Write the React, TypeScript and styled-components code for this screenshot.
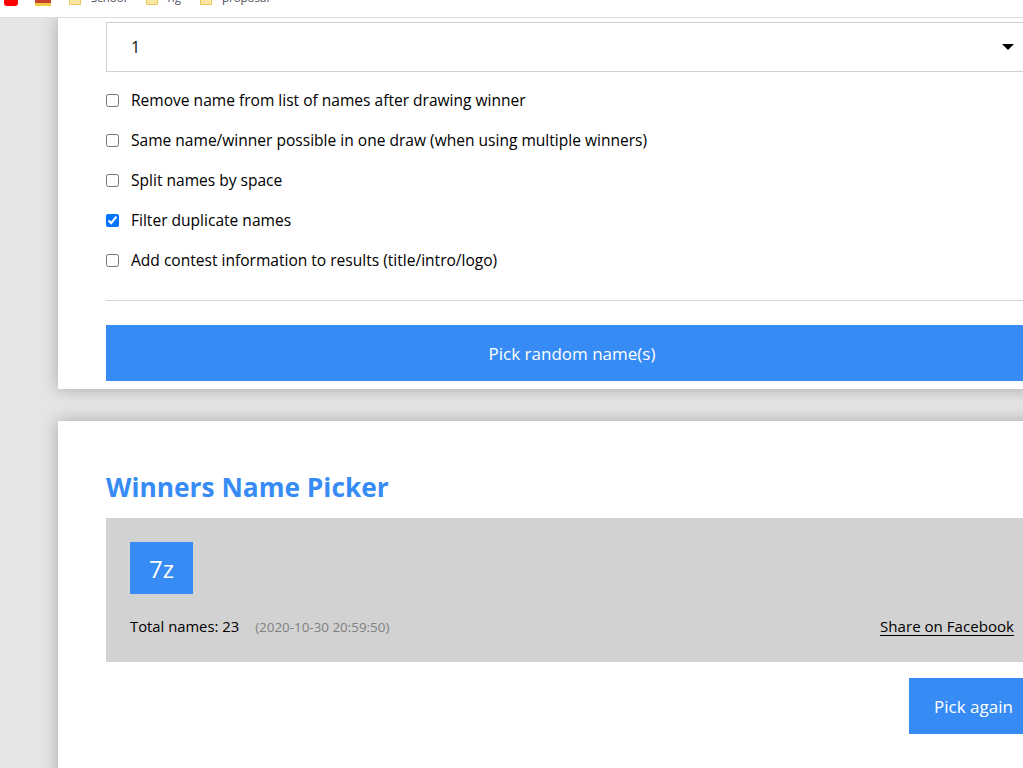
import styled, { createGlobalStyle } from "styled-components"

const Global = createGlobalStyle`
    html, body {
        margin: 0;
        padding: 0;
        width: 1023px;
        height: 768px;
        overflow: hidden;
        background: #e5e5e5;
        font-family: "Open Sans", "Noto Sans", sans-serif;
    }
`

const Bookmarks = styled.div`
    position: relative;
    z-index: 1;
    height: 18px;
    box-sizing: border-box;
    background: #ffffff;
    border-bottom: 1px solid #dcdcdc;
    display: flex;
    align-items: flex-end;
    padding: 0 0 11px 4px;
    overflow: hidden;
`

const Mark = styled.div<{ $gap: number }>`
    display: flex;
    align-items: center;
    flex-shrink: 0;
    gap: 10px;
    margin-right: ${p => p.$gap}px;
    font-size: 11.5px;
    line-height: 16px;
    color: #4a4a5a;
`

const Page = styled.main`
    padding-left: 58px;
    display: flex;
    flex-direction: column;
    gap: 32px;
    width: 1028px;
`

const Card = styled.section`
    background: #ffffff;
    box-shadow: 0 0 16px rgba(0, 0, 0, 0.28);
    padding: 0 48px 8px;
    width: 932px;
    flex-shrink: 0;
`

const TopCard = styled(Card)`
    padding-top: 4px;
`

const SelectBox = styled.div`
    height: 50px;
    box-sizing: border-box;
    border: 1px solid #d0d0d0;
    display: flex;
    align-items: center;
    justify-content: space-between;
    padding: 0 23px 0 24px;
    font-size: 16px;
    color: #111111;
`

const Caret = styled.span`
    width: 0;
    height: 0;
    border-left: 6px solid transparent;
    border-right: 6px solid transparent;
    border-top: 6px solid #000000;
`

const Options = styled.div`
    display: flex;
    flex-direction: column;
    padding: 8px 0 20px;
    border-bottom: 1px solid #d4d4d4;
`

const Option = styled.label`
    height: 40px;
    display: flex;
    align-items: center;
    gap: 12px;
    font-size: 15.55px;
    font-weight: 500;
    color: #000000;
`

const Check = styled.input`
    width: 13px;
    height: 13px;
    margin: 0;
`

const PickButton = styled.button`
    display: block;
    width: 100%;
    height: 56px;
    margin-top: 24px;
    border: 0;
    background: #368cf4;
    color: #ffffff;
    font: inherit;
    font-size: 17px;
`

const Title = styled.h2`
    margin: 0;
    padding: 47px 0 12px;
    font-size: 26.3px;
    line-height: 38px;
    font-weight: 700;
    color: #368cf4;
`

const Result = styled.div`
    height: 144px;
    box-sizing: border-box;
    background: #d2d2d2;
    padding: 24px;
    display: flex;
    flex-direction: column;
    justify-content: space-between;
`

const Winner = styled.div`
    width: 63px;
    height: 52px;
    background: #368cf4;
    color: #ffffff;
    font-size: 24px;
    display: flex;
    align-items: center;
    justify-content: center;
`

const Meta = styled.div`
    display: flex;
    align-items: center;
    justify-content: space-between;
    font-size: 15.1px;
    color: #000000;
    margin-bottom: 2px;
`

const Total = styled.div`
    display: flex;
    align-items: baseline;
    gap: 16px;
    font-size: 14.8px;
`

const Stamp = styled.span`
    font-size: 13.4px;
    color: #808080;
`

const Share = styled.a`
    color: #000000;
    border-bottom: 1px solid #000000;
    line-height: 18px;
    text-decoration: none;
`

const Actions = styled.div`
    display: flex;
    justify-content: flex-end;
    padding: 16px 0 60px;
`

const AgainButton = styled.button`
    width: 129px;
    height: 56px;
    border: 0;
    background: #368cf4;
    color: #ffffff;
    font: inherit;
    font-size: 17px;
`

const Folder = () => (
    <svg width="12" height="14" viewBox="0 0 12 14">
        <path d="M.5 1.5h5l1 2h5v10H.5z" fill="#fbe7a1" stroke="#ecc65c" />
    </svg>
)

const options = [
    { label: "Remove name from list of names after drawing winner", checked: false },
    { label: "Same name/winner possible in one draw (when using multiple winners)", checked: false },
    { label: "Split names by space", checked: false },
    { label: "Filter duplicate names", checked: true },
    { label: "Add contest information to results (title/intro/logo)", checked: false },
]

export default function App() {
    return (
        <>
            <Global />
            <Bookmarks>
                <Mark $gap={17}>
                    <svg width="14" height="14" viewBox="0 0 14 14">
                        <rect y="2" width="14" height="12" rx="3" fill="#f00" />
                    </svg>
                </Mark>
                <Mark $gap={18}>
                    <svg width="16" height="14" viewBox="0 0 16 14">
                        <rect width="16" height="11" fill="#c9402f" />
                        <rect y="11" width="16" height="3" fill="#f7c93e" />
                    </svg>
                </Mark>
                <Mark $gap={19}><Folder />School</Mark>
                <Mark $gap={19}><Folder />ng</Mark>
                <Mark $gap={0}><Folder />proposal</Mark>
            </Bookmarks>
            <Page>
                <TopCard>
                    <SelectBox>1<Caret /></SelectBox>
                    <Options>
                        {options.map(o => (
                            <Option key={o.label}>
                                <Check type="checkbox" defaultChecked={o.checked} />
                                {o.label}
                            </Option>
                        ))}
                    </Options>
                    <PickButton>Pick random name(s)</PickButton>
                </TopCard>
                <Card>
                    <Title>Winners Name Picker</Title>
                    <Result>
                        <Winner>7z</Winner>
                        <Meta>
                            <Total>
                                Total names: 23
                                <Stamp>(2020-10-30 20:59:50)</Stamp>
                            </Total>
                            <Share href="#">Share on Facebook</Share>
                        </Meta>
                    </Result>
                    <Actions>
                        <AgainButton>Pick again</AgainButton>
                    </Actions>
                </Card>
            </Page>
        </>
    )
}
